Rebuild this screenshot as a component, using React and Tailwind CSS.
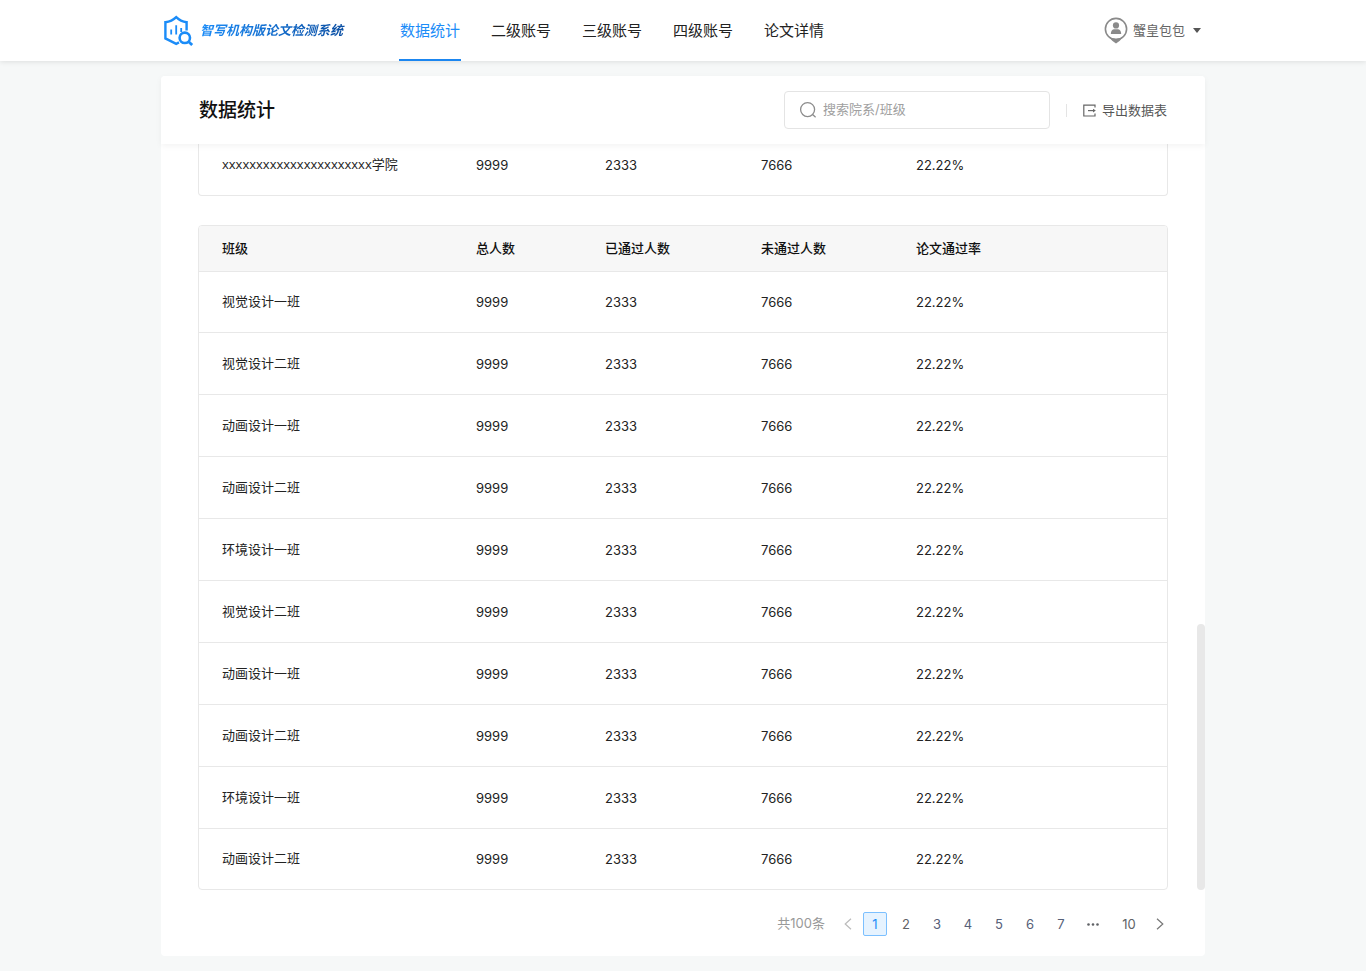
const navItems = ['数据统计', '二级账号', '三级账号', '四级账号', '论文详情'];

const columns = ['班级', '总人数', '已通过人数', '未通过人数', '论文通过率'];

const figures = ['9999', '2333', '7666', '22.22%'];

const classes = [
  '视觉设计一班',
  '视觉设计二班',
  '动画设计一班',
  '动画设计二班',
  '环境设计一班',
  '视觉设计二班',
  '动画设计一班',
  '动画设计二班',
  '环境设计一班',
  '动画设计二班',
];

function LogoIcon() {
  return (
    <svg className="h-8 w-[30px] shrink-0" viewBox="0 0 30 32" fill="none" stroke="#1b8cf8" aria-hidden="true">
      <path
        d="M22.6 15.4V7.2C18.6 6.8 15 5 12.2 2.2 9.4 5 5.6 6.8 1.4 7.2v16.2l10.8 5.4 2.8-1.4"
        strokeWidth="2.4"
        strokeLinejoin="miter"
      />
      <path d="M7.2 14.6v5M12.2 10.2v9.4M17.2 13v4" strokeWidth="1.8" />
      <circle cx="20.8" cy="22.8" r="5.2" strokeWidth="2.6" />
      <path d="M24.4 26.4l3.8 3.6" strokeWidth="2.8" />
    </svg>
  );
}

function UserIcon() {
  return (
    <svg className="h-[27px] w-6 shrink-0" viewBox="0 0 24 27" aria-hidden="true">
      <circle cx="12" cy="12" r="10.6" fill="#fff" stroke="#8a8a8a" strokeWidth="1.6" />
      <path d="M4.6 19.6c4.6 2.9 10.2 2.9 14.8 0l-3.6 4.1L12 26.4l-3.8-2.7z" fill="#8a8a8a" />
      <circle cx="12" cy="8.4" r="3.1" fill="#8a8a8a" />
      <path d="M6.8 17c0-3 1.6-4.7 3.4-4.7h3.6c1.8 0 3.4 1.7 3.4 4.7z" fill="#8a8a8a" />
    </svg>
  );
}

function ColumnWidths() {
  return (
    <colgroup>
      <col className="w-[277px]" />
      <col className="w-[129px]" />
      <col className="w-[156px]" />
      <col className="w-[155px]" />
      <col />
    </colgroup>
  );
}

function PageButton({ label, active, muted }) {
  const tone = active
    ? 'border-[#7cc0ff] bg-[#e6f3ff] text-[#1b8cf8]'
    : muted
      ? 'border-transparent text-[#606266]'
      : 'border-transparent text-[#566078]';
  return (
    <button
      type="button"
      aria-current={active ? 'page' : undefined}
      className={`h-6 min-w-6 rounded-xs border text-center leading-5 ${tone}`}
    >
      {label}
    </button>
  );
}

export default function App() {
  return (
    <div className="flex min-h-screen flex-col bg-[#f6f8f8] font-['Inter','Noto_Sans_CJK_SC',sans-serif] text-[13px] text-[#222]">
      <header className="relative bg-white shadow-[0_1px_5px_rgba(0,0,0,0.1)]">
        <div className="mx-auto flex h-[61px] max-w-[1044px] items-center pr-1 pl-[3px]">
          <a href="#home" className="flex w-[235px] items-center gap-[6px]">
            <LogoIcon />
            <span className="bg-linear-to-r from-[#1b8cf8] to-[#0b4ea2] bg-clip-text pr-1 font-bold whitespace-nowrap text-transparent italic">
              智写机构版论文检测系统
            </span>
          </a>
          <nav className="flex h-full flex-1 gap-[29px] text-[15px]">
            {navItems.map((item, i) => (
              <a
                key={item}
                href={`#nav-${i}`}
                className={
                  i === 0
                    ? 'flex items-center border-b-2 border-[#1b86f0] px-px pt-1 text-[#1b8cf8]'
                    : 'flex items-center px-px pt-[2px]'
                }
              >
                {item}
              </a>
            ))}
          </nav>
          <button type="button" className="flex items-center text-[#666]">
            <UserIcon />
            <span className="ml-[5px]">蟹皇包包</span>
            <svg className="ml-2 h-[5px] w-2" viewBox="0 0 8 5" aria-hidden="true">
              <path d="M0 0h8L4 5z" fill="#555" />
            </svg>
          </button>
        </div>
      </header>

      <main className="mx-auto mt-[15px] mb-[15px] flex w-full max-w-[1044px] flex-1 flex-col rounded-sm bg-white">
        <div className="relative z-10 flex h-[68px] items-center rounded-t-sm bg-white px-[38px] shadow-[0_2px_6px_rgba(0,0,0,0.05)]">
          <h1 className="flex-1 pt-[2px] text-[19px] font-medium text-[#111]">数据统计</h1>
          <label className="flex h-[38px] w-[266px] items-center rounded-sm border border-[#e4e4e4] pl-[14px]">
            <svg className="h-[18px] w-[18px] shrink-0" viewBox="0 0 18 18" fill="none" stroke="#8c8c8c" strokeWidth="1.3" aria-hidden="true">
              <circle cx="8.6" cy="8.6" r="7" />
              <path d="M13.6 13.6l3 2.6" />
            </svg>
            <input
              type="text"
              aria-label="搜索院系/班级"
              placeholder="搜索院系/班级"
              className="ml-[6px] min-w-0 flex-1 bg-transparent outline-none placeholder:text-[#a0a0a0]"
            />
          </label>
          <span className="mx-4 h-[13px] w-px bg-[#e4e4e4]" />
          <button type="button" className="flex items-center gap-[5px] pt-[2px] text-[#555]">
            <svg className="h-[14px] w-[14px]" viewBox="0 0 14 14" fill="none" stroke="#666" strokeWidth="1.2" aria-hidden="true">
              <path d="M12 3.6V1.2H.8v10.8H12V9.6" />
              <path d="M5 6.6h6.4" />
              <path d="M10 4.8l2.8 1.8L10 8.4z" fill="#666" stroke="none" />
            </svg>
            导出数据表
          </button>
        </div>

        <div className="relative px-[37px]">
          <div className="rounded-b-sm border border-t-0 border-[#e8e8e8]">
            <table className="w-full table-fixed" aria-label="学院">
              <ColumnWidths />
              <tbody>
                <tr className="h-[51px]">
                  <td className="pb-[10px] pl-[23px] font-['Open_Sans','Noto_Sans_CJK_SC',sans-serif]">xxxxxxxxxxxxxxxxxxxxxx学院</td>
                  {figures.map((value) => (
                    <td key={value} className="pb-2">{value}</td>
                  ))}
                </tr>
              </tbody>
            </table>
          </div>

          <div className="mt-[29px] overflow-hidden rounded-sm border border-[#e8e8e8]">
            <table className="h-[663px] w-full table-fixed" aria-label="班级">
              <ColumnWidths />
              <thead>
                <tr className="h-[45px] border-b border-[#e8e8e8] bg-[#f7f7f7] text-left text-[#111]">
                  {columns.map((column) => (
                    <th key={column} scope="col" className="font-medium first:pl-[23px]">
                      {column}
                    </th>
                  ))}
                </tr>
              </thead>
              <tbody>
                {classes.map((name, i) => (
                  <tr key={i} className="border-b border-[#e8e8e8] last:border-b-0">
                    <td className="pl-[23px]">{name}</td>
                    {figures.map((value) => (
                      <td key={value} className="pt-[2px]">{value}</td>
                    ))}
                  </tr>
                ))}
              </tbody>
            </table>
          </div>
          <span className="absolute right-0 bottom-0 h-[266px] w-2 rounded-full bg-[#e8e8e8]" />
        </div>

        <nav aria-label="分页" className="flex items-center justify-end gap-[7px] pt-[22px] pr-[37px] pb-5">
          <span className="mr-2 text-[#999]">共100条</span>
          <button type="button" aria-label="上一页" className="flex h-6 w-4 items-center justify-center">
            <svg className="h-3 w-2" viewBox="0 0 8 12" fill="none" stroke="#bbb" strokeWidth="1.2" aria-hidden="true">
              <path d="M7 .8L1.2 6 7 11.2" />
            </svg>
          </button>
          <PageButton label="1" active />
          <PageButton label="2" muted />
          {['3', '4', '5', '6', '7'].map((page) => (
            <PageButton key={page} label={page} />
          ))}
          <span className="flex h-6 w-[26px] items-center justify-center">
            <svg className="h-[3px] w-3" viewBox="0 0 12 3" fill="#606266" aria-hidden="true">
              <circle cx="1.5" cy="1.5" r="1.3" />
              <circle cx="6" cy="1.5" r="1.3" />
              <circle cx="10.5" cy="1.5" r="1.3" />
            </svg>
          </span>
          <span className="flex w-8 justify-center">
            <PageButton label="10" muted />
          </span>
          <button type="button" aria-label="下一页" className="flex h-6 w-4 items-center justify-center">
            <svg className="h-3 w-2" viewBox="0 0 8 12" fill="none" stroke="#777" strokeWidth="1.2" aria-hidden="true">
              <path d="M1 .8L6.8 6 1 11.2" />
            </svg>
          </button>
        </nav>
      </main>
    </div>
  );
}
